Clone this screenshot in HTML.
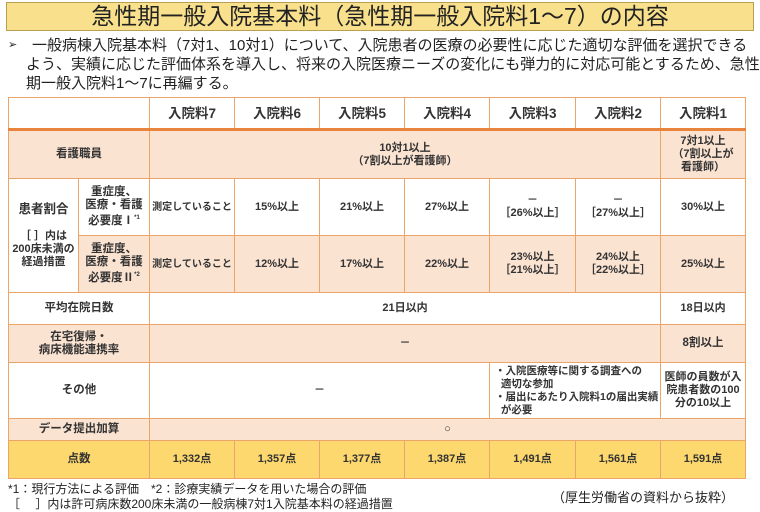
<!DOCTYPE html>
<html><head><meta charset="utf-8"><style>
*{margin:0;padding:0;box-sizing:border-box}
body{width:760px;height:510px;background:#fff;font-family:"Liberation Sans","Noto Sans CJK JP",sans-serif;color:#222;position:relative;overflow:hidden}
.title{position:absolute;left:6px;top:2px;width:748px;height:29px;background:#f8e08c;border:1px solid #b8a050;text-align:center;font-size:23px;line-height:27px;color:#222}
.intro{position:absolute;left:6px;top:36px;width:754px;font-size:15px;line-height:19px;letter-spacing:0;white-space:nowrap}
.intro p{padding-left:26px;position:relative}
.intro p:first-child:before{content:"➢";position:absolute;left:2px;font-size:11px}
table{position:absolute;left:8px;top:97px;border-collapse:collapse;table-layout:fixed;font-size:11px}
td{border:1px solid #eba56a;text-align:center;vertical-align:middle;line-height:13px;font-weight:bold;color:#333}
.p{background:#fbe3d2}
.g{background:#fcd86e}
.h td{font-size:13.5px;border-bottom:3px solid #e8843c}
.b{font-size:11.5px}
.l{text-align:left;padding-left:5px}
.f{position:absolute;font-size:12px;line-height:15px}
</style></head><body>
<div class="title">急性期一般入院基本料（急性期一般入院料1～7）の内容</div>
<div class="intro"><p>一般病棟入院基本料（7対1、10対1）について、入院患者の医療の必要性に応じた適切な評価を選択できる</p><p style="padding-left:20px">よう、実績に応じた評価体系を導入し、将来の入院医療ニーズの変化にも弾力的に対応可能とするため、急性</p><p style="padding-left:20px">期一般入院料1～7に再編する。</p></div>
<table>
<colgroup><col style="width:70px"><col style="width:71px"><col style="width:85px"><col style="width:85px"><col style="width:85px"><col style="width:85px"><col style="width:86px"><col style="width:85px"><col style="width:85px"></colgroup>
<tr class="h" style="height:32px"><td colspan="2"></td><td>入院料7</td><td>入院料6</td><td>入院料5</td><td>入院料4</td><td>入院料3</td><td>入院料2</td><td>入院料1</td></tr>
<tr class="p" style="height:49px"><td colspan="2" class="b">看護職員</td><td colspan="6">10対1以上<br>（7割以上が看護師）</td><td>7対1以上<br>（7割以上が<br>看護師）</td></tr>
<tr style="height:57px"><td rowspan="2"><span class="b" style="font-size:12.5px">患者割合</span><br><br>［ ］内は<br>200床未満の<br>経過措置</td><td class="b">重症度、<br>医療・看護<br>必要度Ⅰ<sup style="font-size:6px">*1</sup></td><td style="font-size:10px">測定していること</td><td>15%以上</td><td>21%以上</td><td>27%以上</td><td>－<br>［26%以上］</td><td>－<br>［27%以上］</td><td>30%以上</td></tr>
<tr class="p" style="height:57px"><td class="b">重症度、<br>医療・看護<br>必要度Ⅱ<sup style="font-size:6px">*2</sup></td><td style="font-size:10px">測定していること</td><td>12%以上</td><td>17%以上</td><td>22%以上</td><td>23%以上<br>［21%以上］</td><td>24%以上<br>［22%以上］</td><td>25%以上</td></tr>
<tr style="height:32px"><td colspan="2" class="b">平均在院日数</td><td colspan="6">21日以内</td><td>18日以内</td></tr>
<tr class="p" style="height:38px"><td colspan="2" class="b">在宅復帰・<br>病床機能連携率</td><td colspan="6">－</td><td class="b">8割以上</td></tr>
<tr style="height:56px"><td colspan="2" class="b">その他</td><td colspan="4">－</td><td colspan="2" class="l" style="font-size:10.5px">・入院医療等に関する調査への<br>&nbsp;&nbsp;適切な参加<br>・届出にあたり入院料1の届出実績<br>&nbsp;&nbsp;が必要</td><td>医師の員数が入<br>院患者数の100<br>分の10以上</td></tr>
<tr class="p" style="height:22px"><td colspan="2" class="b">データ提出加算</td><td colspan="7">○</td></tr>
<tr class="g" style="height:38px"><td colspan="2" class="b">点数</td><td>1,332点</td><td>1,357点</td><td>1,377点</td><td>1,387点</td><td>1,491点</td><td>1,561点</td><td>1,591点</td></tr>
</table>
<div class="f" style="left:8px;top:482px">*1：現行方法による評価　*2：診療実績データを用いた場合の評価</div>
<div class="f" style="left:8px;top:497px">［　 ］内は許可病床数200床未満の一般病棟7対1入院基本料の経過措置</div>
<div class="f" style="left:552px;top:490px;font-size:13px">（厚生労働省の資料から抜粋）</div>
</body></html>
